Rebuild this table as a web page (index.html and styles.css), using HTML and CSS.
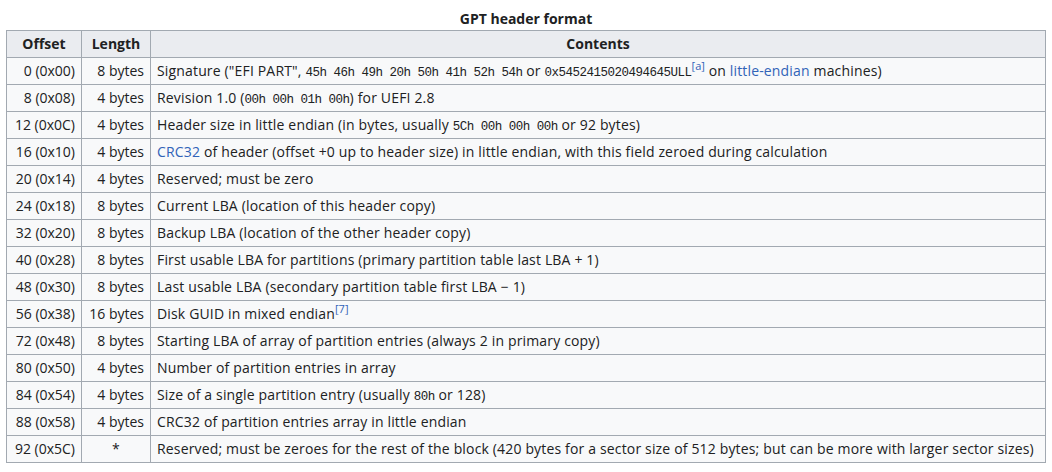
FILE: index.html
```html
<!DOCTYPE html>
<html>
<head>
<meta charset="utf-8">
<link rel="stylesheet" href="styles.css">
</head>
<body>
<table class="wikitable">
<caption>GPT header format</caption>
<thead>
<tr><th class="c-off">Offset</th><th class="c-len">Length</th><th>Contents</th></tr>
</thead>
<tbody>
<tr><td class="r">0 (0x00)</td><td class="r">8 bytes</td><td>Signature ("EFI PART", <code>45h 46h 49h 20h 50h 41h 52h 54h</code> or <code>0x5452415020494645ULL</code><sup><a href="#">[a]</a></sup> on <a href="#">little-endian</a> machines)</td></tr>
<tr><td class="r">8 (0x08)</td><td class="r">4 bytes</td><td>Revision 1.0 (<code>00h 00h 01h 00h</code>) for UEFI 2.8</td></tr>
<tr><td class="r">12 (0x0C)</td><td class="r">4 bytes</td><td>Header size in little endian (in bytes, usually <code>5Ch 00h 00h 00h</code> or 92 bytes)</td></tr>
<tr><td class="r">16 (0x10)</td><td class="r">4 bytes</td><td><a href="#">CRC32</a> of header (offset +0 up to header size) in little endian, with this field zeroed during calculation</td></tr>
<tr><td class="r">20 (0x14)</td><td class="r">4 bytes</td><td>Reserved; must be zero</td></tr>
<tr><td class="r">24 (0x18)</td><td class="r">8 bytes</td><td>Current LBA (location of this header copy)</td></tr>
<tr><td class="r">32 (0x20)</td><td class="r">8 bytes</td><td>Backup LBA (location of the other header copy)</td></tr>
<tr><td class="r">40 (0x28)</td><td class="r">8 bytes</td><td>First usable LBA for partitions (primary partition table last LBA + 1)</td></tr>
<tr><td class="r">48 (0x30)</td><td class="r">8 bytes</td><td>Last usable LBA (secondary partition table first LBA − 1)</td></tr>
<tr><td class="r">56 (0x38)</td><td class="r">16 bytes</td><td>Disk GUID in mixed endian<sup><a href="#">[7]</a></sup></td></tr>
<tr><td class="r">72 (0x48)</td><td class="r">8 bytes</td><td>Starting LBA of array of partition entries (always 2 in primary copy)</td></tr>
<tr><td class="r">80 (0x50)</td><td class="r">4 bytes</td><td>Number of partition entries in array</td></tr>
<tr><td class="r">84 (0x54)</td><td class="r">4 bytes</td><td>Size of a single partition entry (usually <code>80h</code> or 128)</td></tr>
<tr><td class="r">88 (0x58)</td><td class="r">4 bytes</td><td>CRC32 of partition entries array in little endian</td></tr>
<tr><td class="r">92 (0x5C)</td><td class="c">*</td><td>Reserved; must be zeroes for the rest of the block (420 bytes for a sector size of 512 bytes; but can be more with larger sector sizes)</td></tr>
</tbody>
</table>
</body>
</html>
```
FILE: styles.css
```css
html, body {
  margin: 0;
  padding: 0;
  background: #ffffff;
}
body {
  padding: 9px 6px 0 6px;
  font-family: "Open Sans", "Liberation Sans", Arial, sans-serif;
  font-size: 14px;
  color: #202122;
}
.wikitable {
  width: 1040px;
  border-collapse: collapse;
  background: #f8f9fa;
  border: 1px solid #a2a9b1;
  line-height: 20px;
}
.wikitable caption {
  font-weight: bold;
  font-size: 14px;
  line-height: 20px;
  padding-bottom: 1px;
  text-align: center;
}
.wikitable th,
.wikitable td {
  border: 1px solid #a2a9b1;
  padding: 3px 6px 3px 6px;
  height: 20px;
}
.wikitable td {
  letter-spacing: 0.16px;
  white-space: nowrap;
}
.wikitable th {
  background: #eaecf0;
  font-weight: bold;
  text-align: center;
}
.c-off { width: 62px; }
.c-len { width: 56px; }
.r { text-align: right; }
.wikitable td.r { letter-spacing: 0; }
.c { text-align: center; }
code {
  font-family: "Liberation Mono", "Courier New", monospace;
  font-size: 12.5px;
  line-height: 1;
  letter-spacing: -0.5px;
  color: #202122;
}
a {
  color: #3163b8;
  text-decoration: none;
}
sup {
  font-size: 11px;
  line-height: 0;
  letter-spacing: 0;
  vertical-align: 6px;
}
```
